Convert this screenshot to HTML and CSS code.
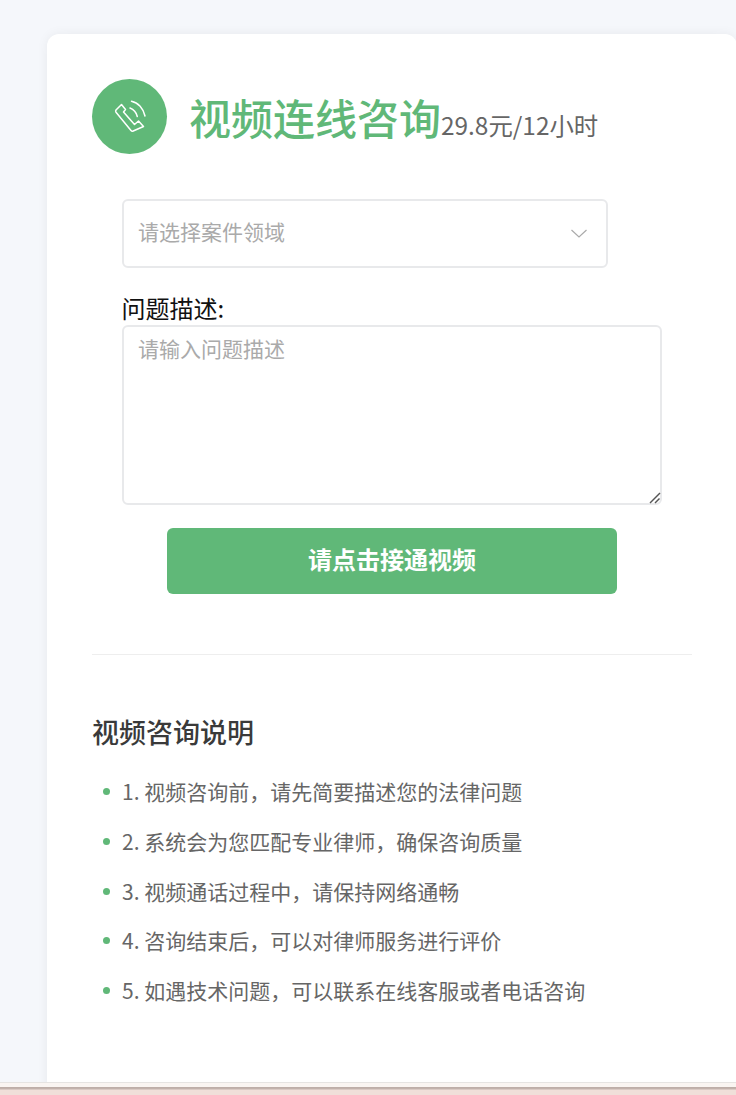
FILE: index.html
```html
<!DOCTYPE html>
<html lang="zh-CN">
<head>
  <meta charset="UTF-8">
  <meta name="viewport" content="width=device-width, initial-scale=1.0">
  <title>视频连线咨询</title>
  <link rel="stylesheet" href="styles.css">
</head>
<body>
  <div class="page">
    <main class="main">
      <div class="card">
        <!-- header -->
        <div class="card-head">
          <div class="head-icon">
            <svg width="42" height="42" viewBox="0 0 42 42" fill="none" stroke="#fff" stroke-width="1.5" stroke-linejoin="round" stroke-linecap="round">
              <path d="M12.500 8.500 L7 14 C6.500 14.800 6.500 15.500 7 16.200 L22 34.500 C22.600 35.200 23.400 35.300 24.200 35 L34.500 30.500 L29.500 25 L25.500 28.500 L14.500 16 L16.500 13.500 Z"/>
              <path d="M21 12 C24.500 13.300 27.300 16.500 28.300 20.500"/>
              <path d="M22.500 5.200 C29 6.500 34.500 12.500 36 20"/>
            </svg>
          </div>
          <h1 class="title">视频连线咨询</h1>
          <span class="price">29.8元/12小时</span>
        </div>

        <!-- form -->
        <form class="form">
          <div class="select-box">
            <span class="select-text">请选择案件领域</span>
            <svg class="select-arrow" width="16" height="9" viewBox="0 0 16 9" fill="none" stroke="#aaa" stroke-width="1.2">
              <path d="M0.500 1 L8 8 L15.500 1"/>
            </svg>
          </div>
          <label class="field-label" for="desc">问题描述:</label>
          <div class="field-wrap">
            <textarea class="field-input" id="desc" placeholder="请输入问题描述"></textarea>
            <svg class="resize-grip" width="14" height="14" viewBox="0 0 14 14" fill="none" stroke="#555" stroke-width="1.500">
              <path d="M3 13 L13 3"/>
              <path d="M8 13 L12.500 8.500"/>
            </svg>
          </div>
          <button class="submit-btn" type="button">请点击接通视频</button>
        </form>

        <div class="divider"></div>

        <!-- notes -->
        <h2 class="notes-title">视频咨询说明</h2>
        <ul class="notes">
          <li>1. 视频咨询前，请先简要描述您的法律问题</li>
          <li>2. 系统会为您匹配专业律师，确保咨询质量</li>
          <li>3. 视频通话过程中，请保持网络通畅</li>
          <li>4. 咨询结束后，可以对律师服务进行评价</li>
          <li>5. 如遇技术问题，可以联系在线客服或者电话咨询</li>
        </ul>
      </div>
    </main>
    <div class="bottom-strip"></div>
  </div>
</body>
</html>
```

FILE: styles.css
```css
* {
  box-sizing: border-box;
}

body {
  margin: 0;
  background-color: #f5f7fb;
  font-family: "Noto Sans CJK SC", "Noto Sans", sans-serif;
}

.page {
  display: flex;
  flex-direction: column;
  height: 1095px;
  overflow: hidden;
}

.main {
  flex: 1;
  min-height: 0;
  overflow: hidden;
  padding: 34px 0 0 47px;
}

.card {
  width: 690px;
  min-height: 1100px;
  padding: 45px;
  background-color: #fff;
  border-radius: 12px;
  box-shadow: 0 0 12px rgba(0, 0, 0, 0.06);
}

.card-head {
  display: flex;
  align-items: center;
  height: 75px;
}

.head-icon {
  display: flex;
  align-items: center;
  justify-content: center;
  flex: none;
  width: 75px;
  height: 75px;
  margin-right: 22px;
  border-radius: 50%;
  background-color: #60b878;
}

.title {
  margin: 0;
  font-size: 42px;
  font-weight: 500;
  color: #60b878;
  line-height: 1;
}

.price {
  margin-top: 18px;
  font-size: 24.400px;
  color: #666;
  line-height: 1;
}

.form {
  display: flex;
  flex-direction: column;
  align-items: flex-start;
  margin: 45px 0 0 30px;
}

.select-box {
  display: flex;
  align-items: center;
  justify-content: space-between;
  width: 486px;
  height: 69px;
  padding: 0 19px 0 14px;
  border: 2px solid #e8e9eb;
  border-radius: 6px;
}

.select-text {
  padding-bottom: 6px;
  font-size: 21px;
  color: #aaa;
}

.field-label {
  margin: 26px 0 3px -0.500px;
  font-size: 24px;
  line-height: 28px;
  color: #111;
}

.field-wrap {
  position: relative;
  width: 540px;
  height: 180px;
}

.field-input {
  display: block;
  width: 100%;
  height: 100%;
  padding: 6px 14px;
  border: 2px solid #e8e9eb;
  border-radius: 6px;
  outline: none;
  resize: none;
  font-family: inherit;
  font-size: 21px;
  line-height: 30px;
}

.field-input::placeholder {
  color: #aaa;
}

.resize-grip {
  position: absolute;
  right: 1px;
  bottom: 1px;
  pointer-events: none;
}

.submit-btn {
  width: 450px;
  height: 66px;
  margin: 23px 0 0 45px;
  padding: 0 0 6px;
  border: none;
  border-radius: 6px;
  background-color: #60b878;
  color: #fff;
  font-family: inherit;
  font-size: 24px;
  font-weight: 700;
}

.divider {
  height: 1px;
  margin-top: 60px;
  background-color: #eee;
}

.notes-title {
  margin: 59px 0 0;
  font-size: 27px;
  font-weight: 500;
  line-height: 36px;
  color: #3a3a3a;
}

.notes {
  margin: 17px 0 0;
  padding: 0;
  list-style: none;
}

.notes li {
  position: relative;
  padding-left: 30px;
  font-size: 21px;
  line-height: 49.750px;
  color: #666;
}

.notes li::before {
  content: "";
  position: absolute;
  left: 11px;
  top: 21px;
  width: 7px;
  height: 7px;
  border-radius: 50%;
  background-color: #60b878;
}

.bottom-strip {
  flex: none;
  height: 13px;
  border-top: 1px solid #e6e4e2;
  background: linear-gradient(#faf5f2 0, #faf5f2 4px, #bcaca6 4px, #c4b4ae 6px, #f0dfd9 7px, #f0dfd9 100%);
}
```
